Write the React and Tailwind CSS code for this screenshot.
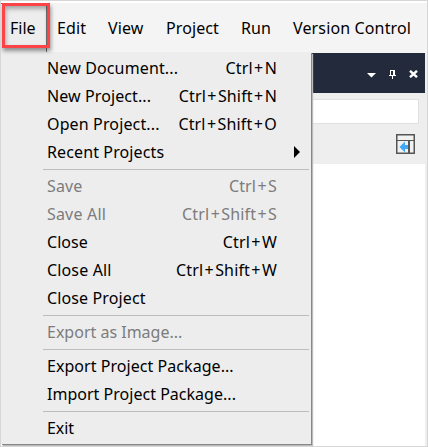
const groups = [
  [
    { label: 'New Document...', keys: 'Ctrl+N', fit: 'tracking-[0.14px]' },
    { label: 'New Project...', keys: 'Ctrl+Shift+N', fit: 'tracking-[0.1px]' },
    { label: 'Open Project...', keys: 'Ctrl+Shift+O', fit: 'tracking-[0.14px]' },
    { label: 'Recent Projects', submenu: true, fit: 'tracking-[0.12px]' },
  ],
  [
    { label: 'Save', keys: 'Ctrl+S', disabled: true, fit: 'tracking-[0.1px]' },
    { label: 'Save All', keys: 'Ctrl+Shift+S', disabled: true, fit: 'tracking-[0.18px]' },
    { label: 'Close', keys: 'Ctrl+W', fit: 'tracking-[0.05px]' },
    { label: 'Close All', keys: 'Ctrl+Shift+W', fit: 'tracking-[0.15px]' },
    { label: 'Close Project', fit: 'tracking-[0.12px]' },
  ],
  [{ label: 'Export as Image...', disabled: true, fit: 'tracking-[0px]' }],
  [
    { label: 'Export Project Package...', fit: 'tracking-[0.05px]' },
    { label: 'Import Project Package...', fit: 'tracking-[0.02px]' },
  ],
  [{ label: 'Exit', fit: 'tracking-[-0.1px]' }],
];

const menus = [
  { label: 'Edit', box: 'w-[51px] tracking-[0.1px]' },
  { label: 'View', box: 'w-[58px] tracking-[0.1px]' },
  { label: 'Project', box: 'w-[75px] tracking-[0.1px]' },
  { label: 'Run', box: 'w-[52px] tracking-[0.1px]' },
  { label: 'Version Control', box: 'w-[130px] tracking-[0.14px]' },
];

function Shortcut({ keys }) {
  return (
    <span className="tracking-[0.16px]">
      {keys.split('+').map((key, i) => (
        <span key={key}>
          {i > 0 && <span className="mx-[1.3px]">+</span>}
          {key}
        </span>
      ))}
    </span>
  );
}

function MenuItem({ item }) {
  return (
    <div
      className={`flex h-7 items-center justify-between pl-[46px] pr-[34px] ${item.disabled ? 'text-[#7c7c7c]' : 'text-black'}`}
    >
      <span className={item.fit}>{item.label}</span>
      {item.keys && <Shortcut keys={item.keys} />}
      {item.submenu && (
        <svg className="-mr-[23px] h-[12px] w-[6px]" viewBox="0 0 6 12">
          <path d="M0 0L6 6L0 12Z" fill="#000" />
        </svg>
      )}
    </div>
  );
}

export default function App() {
  return (
    <div className="relative h-[447px] w-[428px] overflow-hidden border border-[#d6d6d6] bg-white pt-[2px] font-['Noto_Sans','Open_Sans',sans-serif] text-[16px] leading-[28px] whitespace-nowrap">
      <div className="flex h-[50px] bg-[#f4f4f4]">
        <div className="flex w-[46px] items-center border-r border-t border-[#707070] bg-[#ededed] pb-[2px] pl-[9px]">
          File
        </div>
        <div className="flex items-center pl-[10px]">
          {menus.map((m) => (
            <span key={m.label} className={m.box}>{m.label}</span>
          ))}
        </div>
      </div>

      <div className="flex h-[394px] flex-col border-r-2 border-[#eeeeee]">
        <div className="flex h-10 items-center justify-end bg-[#232a3b] pr-[7px]">
          <svg className="mr-[13px] mt-[4px] h-[5px] w-[9px]" viewBox="0 0 9 5">
            <path d="M0 0H9L4.5 4.5Z" fill="#fff" />
          </svg>
          <svg className="mr-[13px] mt-[2px] h-[9px] w-[7px]" viewBox="0 0 7 9" shapeRendering="crispEdges">
            <path d="M1 0H6V5H7V6H4V9H3V6H0V5H1ZM2 1V5H4V1Z" fill="#fff" fillRule="evenodd" />
          </svg>
          <svg className="mt-[2px] h-[8px] w-[9px]" viewBox="0 0 9 8">
            <path d="M1 0.8L8 7.2M8 0.8L1 7.2" stroke="#fff" strokeWidth="2.4" />
          </svg>
        </div>
        <div className="flex h-[71px] flex-col items-end bg-[#eeeeee] pt-[6px]">
          <div className="mr-[6px] h-[25px] w-[200px] border border-[#e0e0e0] bg-white" />
          <svg className="mr-[10px] mt-[10px] h-[20px] w-[19px]" viewBox="0 0 19 20">
            <rect x="0.75" y="0.75" width="17.5" height="18.5" fill="#f1f1f1" stroke="#555" strokeWidth="1.5" />
            <path d="M0 6.5H19" stroke="#555" strokeWidth="1" />
            <path d="M13 6V20" stroke="#555" strokeWidth="2" />
            <path d="M3.5 13L9 7.5V11H12V15H9V18.5Z" fill="#3fa9f5" />
          </svg>
        </div>
      </div>

      <div className="absolute left-0 top-[51px] h-[392px] w-[310px] bg-[#ededed] pt-[2px] shadow-[1px_1px_0_#888,2px_2px_1px_#bbb]">
        {groups.map((group, i) => (
          <div key={i}>
            {i > 0 && (
              <div className="flex h-[6px] items-center pl-[42px] pr-[2px]">
                <div className="h-px w-full bg-[#bdbdbd]" />
              </div>
            )}
            {group.map((item) => (
              <MenuItem key={item.label} item={item} />
            ))}
          </div>
        ))}
      </div>

      <div className="absolute left-[1px] top-[2px] h-[45px] w-[48px] border-[3px] border-[#fc4448] shadow-[1px_3px_4px_rgba(0,0,0,0.4),inset_1px_3px_4px_rgba(0,0,0,0.3)]" />
    </div>
  );
}
